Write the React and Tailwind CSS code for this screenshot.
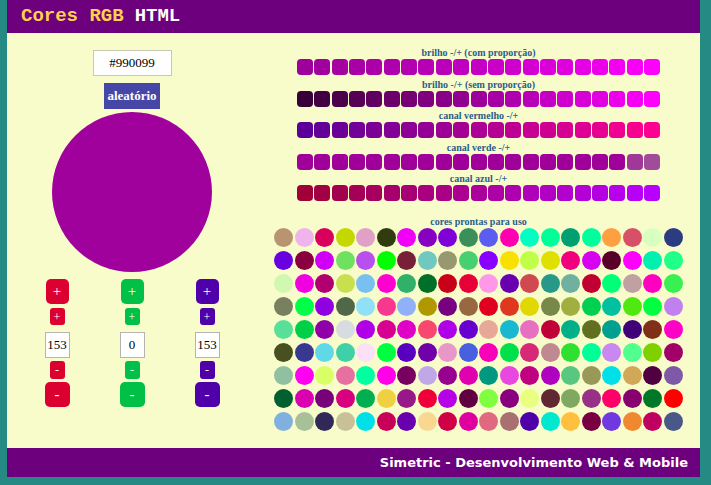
import React from 'react';

// cores prontas (9 linhas x 20)
const swatches = [
  '#b89470', '#f0b4ec', '#d8005c', '#c4d800', '#e0a0c8', '#303c10', '#f000f8', '#8800c0', '#8000d8', '#3a9058',
  '#5c5cf0', '#ff00b0', '#00ffc0', '#00ff98', '#00a070', '#00ff9c', '#ffa040', '#d85068', '#d8ffc0', '#2c3c80',
  '#6800e0', '#880040', '#d000f8', '#70e060', '#b850f0', '#00ff00', '#782038', '#70c8c0', '#989870', '#48d070',
  '#8800ff', '#f8e000', '#c0ff48', '#e0e000', '#f0007c', '#d800f0', '#580028', '#ff00ff', '#00f0b0', '#20ff88',
  '#d0f8b0', '#f000e0', '#b00070', '#c8e050', '#78c0f0', '#ff00d0', '#30b068', '#007028', '#c80018', '#e80038',
  '#ff98e8', '#6800b0', '#d04850', '#289888', '#70b0a0', '#c00030', '#00ff78', '#c0a0a0', '#ff00c0', '#38f050',
  '#788060', '#00ff48', '#9000e0', '#506848', '#90e0f8', '#f83890', '#90b0f8', '#b09800', '#780080', '#986840',
  '#e00020', '#e03820', '#e0d800', '#788848', '#a0b040', '#00d050', '#00c0a0', '#50e810', '#00ff40', '#c080f0',
  '#58e098', '#00d048', '#9000a8', '#d8dce0', '#b000e8', '#d80090', '#e000c8', '#f84870', '#b000e8', '#6800d0',
  '#e8a898', '#18b8d0', '#e870c0', '#c00038', '#00b088', '#607020', '#00a090', '#400078', '#803018', '#ff00c8',
  '#485020', '#383890', '#60d8e8', '#40d0a8', '#fce0f8', '#00ff40', '#5800c0', '#7000a8', '#e898c8', '#4860e0',
  '#f800b8', '#00e048', '#d82878', '#c08890', '#30e030', '#00ff98', '#c888f0', '#50ff90', '#80d000', '#a00068',
  '#90c0a0', '#ff00f0', '#d8ff68', '#e870a0', '#00ffa0', '#ff00e8', '#780060', '#c0a8e8', '#980090', '#e000b0',
  '#009880', '#e848e0', '#c00080', '#b000c0', '#58c880', '#989858', '#00e0e8', '#d0a858', '#500040', '#8058a8',
  '#006030', '#d800b0', '#780078', '#d80080', '#00b050', '#f0d040', '#981888', '#f00038', '#b800e8', '#600040',
  '#80ff40', '#880080', '#e8ff80', '#602830', '#80a860', '#983088', '#ff0068', '#880070', '#007828', '#ff0000',
  '#80b0e0', '#a8c098', '#302858', '#c8c098', '#00e0e8', '#c80058', '#6800b0', '#f8d890', '#d00048', '#e000a0',
  '#e06880', '#a87070', '#5000a8', '#00e8d0', '#ffc040', '#780040', '#7038e0', '#f08830', '#c00060', '#485888',
];

const lerp = (a, b, t) => Math.round(a + (b - a) * t);
const rgb = (r, g, b) => `rgb(${r},${g},${b})`;

const steps = Array.from({ length: 21 }, (_, i) => i / 20);

const bars = [
  { label: 'brilho -/+ (com proporção)', colors: steps.map((t) => rgb(lerp(158, 255, t * t * 0.4 + t * 0.6), 0, lerp(156, 255, t * t * 0.4 + t * 0.6))) },
  { label: 'brilho -/+ (sem proporção)', colors: steps.map((t) => rgb(lerp(56, 255, t), 0, lerp(56, 255, t))) },
  { label: 'canal vermelho -/+', colors: steps.map((t) => rgb(lerp(90, 255, t), 0, lerp(152, 144, t))) },
  { label: 'canal verde -/+', colors: steps.map((t, i) => rgb(160, i === 20 ? 76 : i === 19 ? 56 : 0, 154)) },
  { label: 'canal azul -/+', colors: steps.map((t) => rgb(lerp(160, 184, t), 0, lerp(56, 255, t))) },
];

const channels = [
  { color: 'bg-[#dc0030]', value: '153' },
  { color: 'bg-[#00c048]', value: '0' },
  { color: 'bg-[#5000a8]', value: '153' },
];

function Channel({ color, value }) {
  return (
    <div className="w-[75px] flex flex-col items-center font-['Liberation_Serif',serif] text-white">
      <button className={`${color} w-[23px] h-[25px] rounded-[5px] text-[15px] leading-none flex items-center justify-center`}>+</button>
      <button className={`${color} mt-[4px] w-[15px] h-[17px] rounded-[3px] text-[12px] leading-none flex items-center justify-center`}>+</button>
      <div className="mt-[7px] w-[25px] h-[26px] bg-white border border-[#b4b4b4] text-black text-[13px] flex items-center justify-center">{value}</div>
      <button className={`${color} mt-[3px] w-[15px] h-[18px] rounded-[3px] text-[12px] leading-none flex items-center justify-center`}>-</button>
      <button className={`${color} mt-[3px] w-[25px] h-[25px] rounded-[5px] text-[15px] leading-none flex items-center justify-center`}>-</button>
    </div>
  );
}

export default function App() {
  return (
    <div className="min-h-[485px] bg-[#268a84] pl-[7px] pr-[11px] pb-[8px]">
      {/* topo */}
      <header className="h-[33px] bg-[#6d007d] flex items-center pl-[14px] font-['Liberation_Mono',monospace] font-bold text-[19px]">
        <span className="text-[#ffd04c]">Cores RGB</span>
        <span className="text-white ml-[11px]">HTML</span>
      </header>

      <main className="h-[415px] bg-[#f8fccb] flex">
        {/* coluna esquerda */}
        <div className="w-[250px] flex flex-col items-center pt-[17px]">
          <div className="w-[79px] h-[26px] bg-white border border-[#c8c8b4] flex items-center justify-center font-['Liberation_Serif',serif] text-[13px] text-black">
            #990099
          </div>
          <button className="mt-[7px] w-[56px] h-[26px] bg-[#4646a6] text-white font-bold font-['Liberation_Serif',serif] text-[13px]">
            aleatório
          </button>
          <div className="mt-[3px] w-[160px] h-[160px] rounded-full bg-[#a0009c]" />
          <div className="mt-[7px] flex">
            {channels.map((c, i) => (
              <Channel key={i} color={c.color} value={c.value} />
            ))}
          </div>
        </div>

        {/* coluna direita */}
        <div className="flex-1 flex flex-col items-center pt-[13px] font-['Liberation_Serif',serif] font-bold text-[#2b5d8a] text-[10px]">
          {bars.map((bar) => (
            <div key={bar.label} className="flex flex-col items-center mb-[2.5px]">
              <div className="h-[13px] leading-[13px]">{bar.label}</div>
              <div className="flex gap-[1.35px]">
                {bar.colors.map((c, i) => (
                  <div key={i} className="w-[16px] h-[16px] rounded-[4px]" style={{ backgroundColor: c }} />
                ))}
              </div>
            </div>
          ))}

          <div className="mt-[12.5px] h-[12px] leading-[12px]">cores prontas para uso</div>
          <div className="grid grid-cols-[repeat(20,19px)] gap-x-[1.5px] gap-y-[4px]">
            {swatches.map((c, i) => (
              <div key={i} className="w-[19px] h-[19px] rounded-full" style={{ backgroundColor: c }} />
            ))}
          </div>
        </div>
      </main>

      {/* rodapé */}
      <footer className="h-[29px] bg-[#6d007d] flex items-center justify-end pr-[12px] font-['DejaVu_Sans',sans-serif] font-bold text-[13px] text-white">
        Simetric - Desenvolvimento Web &amp; Mobile
      </footer>
    </div>
  );
}
